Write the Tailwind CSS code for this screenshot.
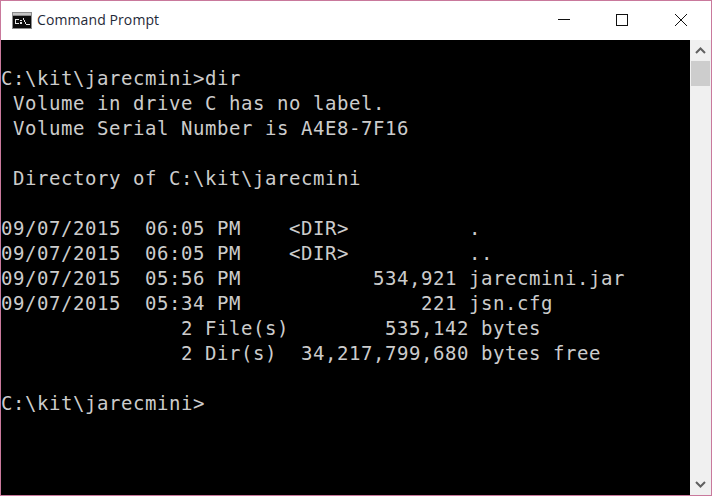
<!DOCTYPE html>
<html>
<head>
<meta charset="utf-8">
<script src="https://cdn.jsdelivr.net/npm/@tailwindcss/browser@4"></script>
</head>
<body class="m-0 bg-black overflow-hidden">
<div class="w-[712px] h-[496px] border border-[#c9799c] flex flex-col bg-white">
  <div class="h-[39px] flex items-center bg-white shrink-0">
    <svg class="ml-[11px] mb-[1px]" width="20" height="17" viewBox="0 0 20 17" shape-rendering="crispEdges">
      <rect width="20" height="17" fill="#8c8c8c"/>
      <rect x="1" y="1" width="18" height="2" fill="#c4c4c4"/>
      <rect x="1" y="4" width="18" height="12" fill="#0c0c0c"/>
      <path d="M3 7h4v1H3zM3 8h1v3H3zM3 11h4v1H3zM8 8h2v1H8zM8 10h2v2H8zM11 6h1v2h-1zM12 8h1v2h-1zM13 10h1v2h-1zM14 12h4v1h-4z" fill="#e6e6e6"/>
    </svg>
    <span class="ml-[5px] text-[14px] tracking-[0.1px] leading-none text-[#1f2a38] font-['Open_Sans',sans-serif] mb-[1px]">Command Prompt</span>
    <div class="ml-auto flex items-center h-full">
      <svg width="45" height="39" viewBox="0 0 45 39" shape-rendering="crispEdges"><rect x="17" y="18" width="12" height="1" fill="#111"/></svg>
      <svg class="ml-[13px]" width="45" height="39" viewBox="0 0 45 39" shape-rendering="crispEdges"><rect x="17.5" y="13.5" width="11" height="11" fill="none" stroke="#111"/></svg>
      <svg class="ml-[14px] mr-[8px]" width="45" height="39" viewBox="0 0 45 39"><path d="M17 13l12 12M29 13L17 25" stroke="#111" fill="none"/></svg>
    </div>
  </div>
  <div class="flex-1 flex min-h-0">
    <pre class="flex-1 m-0 pt-px bg-black text-[#cccccc] font-['DejaVu_Sans_Mono',monospace] text-[19px] tracking-[0.56px] leading-[25px] overflow-hidden">

C:\kit\jarecmini&gt;dir
 Volume in drive C has no label.
 Volume Serial Number is A4E8-7F16

 Directory of C:\kit\jarecmini

09/07/2015  06:05 PM    &lt;DIR&gt;          .
09/07/2015  06:05 PM    &lt;DIR&gt;          ..
09/07/2015  05:56 PM           534,921 jarecmini.jar
09/07/2015  05:34 PM               221 jsn.cfg
               2 File(s)        535,142 bytes
               2 Dir(s)  34,217,799,680 bytes free

C:\kit\jarecmini&gt;</pre>
    <div class="w-[21px] shrink-0 bg-[#f0f0f0] flex flex-col items-center">
      <svg class="mt-[7px]" width="11" height="7" viewBox="0 0 11 7"><path d="M1 6l4.5-4.5L10 6" stroke="#606060" stroke-width="2" fill="none"/></svg>
      <div class="mt-[7px] w-[19px] h-[25px] bg-[#cdcdcd]"></div>
      <svg class="mt-auto mb-[7px]" width="11" height="7" viewBox="0 0 11 7"><path d="M1 1l4.5 4.5L10 1" stroke="#606060" stroke-width="2" fill="none"/></svg>
    </div>
  </div>
</div>
</body>
</html>
